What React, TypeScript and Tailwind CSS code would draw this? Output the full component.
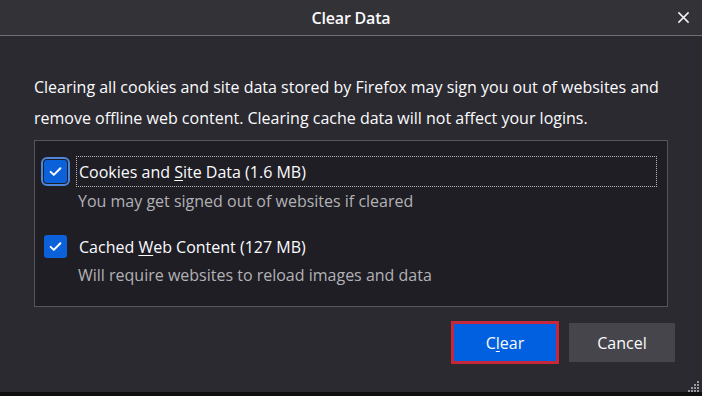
import * as React from "react";

function Check({ focused }: { focused?: boolean }) {
  return (
    <span
      className={`flex items-center justify-center w-[23px] h-[23px] rounded-[3px] bg-[#0b61d9] shrink-0 ${
        focused ? "outline-2 outline-offset-1 outline-[#4f86d8]" : ""
      }`}
    >
      <svg viewBox="0 0 16 16" className="w-[15px] h-[15px]" fill="none">
        <path d="M2.8 8.4l3.4 3.2L13.2 4.6" stroke="#ffffff" strokeWidth="2.1" strokeLinecap="round" strokeLinejoin="round" />
      </svg>
    </span>
  );
}

export default function App() {
  return (
    <div
      className="w-[702px] h-[396px] bg-[#2b2a30] flex flex-col text-[#fbfbfe] overflow-hidden"
      style={{ fontFamily: '"Open Sans", "Noto Sans", sans-serif' }}
    >
      <div className="relative h-[36px] shrink-0 flex items-center justify-center bg-[#323237] border-b border-[#6e6e73]">
        <span className="text-[16px] font-semibold tracking-[-0.2px]">Clear Data</span>
        <button className="absolute right-[10px] top-[8px] w-[18px] h-[18px] flex items-center justify-center">
          <svg viewBox="0 0 14 14" className="w-[13px] h-[13px]">
            <path d="M1.5 1.5l11 11M12.5 1.5l-11 11" stroke="#f3f3f3" strokeWidth="1.6" />
          </svg>
        </button>
      </div>

      <div className="flex-1 flex flex-col px-[34px] pt-[36px]">
        <p className="text-[16px] leading-[31px]">
          Clearing all cookies and site data stored by Firefox may sign you out of websites and
          <br />
          remove offline web content. Clearing cache data will not affect your logins.
        </p>

        <div className="mt-[6px] h-[167px] border border-[#55555b] bg-[#1f1e24] pl-[8px] pr-[10px] pt-[15px]">
          <div className="flex items-center gap-[9px] h-[31px]">
            <span className="ml-[1px]">
              <Check focused />
            </span>
            <span className="flex-1 h-[31px] flex items-center outline-1 outline-dotted outline-[#b8b8bc] -outline-offset-1 pl-[3px] text-[16px]">
              <span>
                Cookies and <u className="underline-offset-2">S</u>ite Data (1.6 MB)
              </span>
            </span>
          </div>
          <div className="pl-[35px] text-[16px] leading-[28px] text-[#b2b2b6]">
            You may get signed out of websites if cleared
          </div>

          <div className="flex items-center gap-[9px] h-[31px] mt-[16px]">
            <span className="ml-[1px]">
              <Check />
            </span>
            <span className="pl-[3px] text-[16px]">
              Cached <u className="underline-offset-2">W</u>eb Content (127 MB)
            </span>
          </div>
          <div className="pl-[35px] mt-[-1px] text-[16px] leading-[28px] text-[#b2b2b6]">
            Will require websites to reload images and data
          </div>
        </div>

        <div className="flex justify-end items-center gap-[10px] mt-[14px] mr-[-7px]">
          <button className="w-[108px] h-[43px] border-[3px] border-[#c4283a] bg-[#0060df] flex items-center justify-center text-[16px]">
            <span>
              C<u className="underline-offset-2">l</u>ear
            </span>
          </button>
          <button className="w-[106px] h-[39px] bg-[#45454b] flex items-center justify-center text-[16px]">
            Cancel
          </button>
        </div>

        <div className="flex-1" />
      </div>
      <div className="relative h-[4px] bg-[#0f0f10] shrink-0">
        <svg className="absolute right-[2px] bottom-[4px]" width="12" height="12" viewBox="0 0 12 12">
          <g fill="#9a9aa0">
            <rect x="9" y="1" width="2" height="2" />
            <rect x="6" y="4" width="2" height="2" />
            <rect x="9" y="4" width="2" height="2" />
            <rect x="3" y="7" width="2" height="2" />
            <rect x="6" y="7" width="2" height="2" />
            <rect x="9" y="7" width="2" height="2" />
            <rect x="0" y="10" width="2" height="2" />
            <rect x="3" y="10" width="2" height="2" />
            <rect x="6" y="10" width="2" height="2" />
            <rect x="9" y="10" width="2" height="2" />
          </g>
        </svg>
      </div>
    </div>
  );
}
